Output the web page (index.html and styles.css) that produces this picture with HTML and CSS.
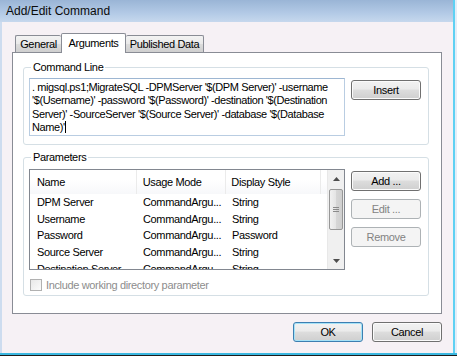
FILE: index.html
```html
<!DOCTYPE html>
<html>
<head>
<meta charset="utf-8">
<title>Add/Edit Command</title>
<link rel="stylesheet" href="styles.css">
</head>
<body>
<div class="frame">
  <div class="window">
    <div class="titlebar">Add/Edit Command</div>
    <div class="client">
      <div class="tabs">
        <div class="tab tab-general">General</div>
        <div class="tab tab-selected">Arguments</div>
        <div class="tab tab-published">Published Data</div>
      </div>
      <div class="pane">
        <div class="group group-cmd">
          <div class="legend">Command Line</div>
          <div class="group-body">
            <div class="textbox">. migsql.ps1;MigrateSQL -DPMServer '$(DPM Server)' -username<br>'$(Username)' -password '$(Password)' -destination '$(Destination<br>Server)' -SourceServer '$(Source Server)' -database '$(Database<br>Name)'<span class="caret"></span></div>
            <div class="btn btn-insert">Insert</div>
          </div>
        </div>
        <div class="group group-params">
          <div class="legend">Parameters</div>
          <div class="group-body">
            <div class="listview">
              <div class="lv-main">
                <div class="lv-header">
                  <div class="col col1">Name</div>
                  <div class="col col2">Usage Mode</div>
                  <div class="col col3">Display Style</div>
                  <div class="col col-rest"></div>
                </div>
                <div class="lv-row"><div class="col col1">DPM Server</div><div class="col col2">CommandArgu...</div><div class="col col3">String</div></div>
                <div class="lv-row"><div class="col col1">Username</div><div class="col col2">CommandArgu...</div><div class="col col3">String</div></div>
                <div class="lv-row"><div class="col col1">Password</div><div class="col col2">CommandArgu...</div><div class="col col3">Password</div></div>
                <div class="lv-row"><div class="col col1">Source Server</div><div class="col col2">CommandArgu...</div><div class="col col3">String</div></div>
                <div class="lv-row"><div class="col col1">Destination Server</div><div class="col col2">CommandArgu...</div><div class="col col3">String</div></div>
              </div>
              <div class="scrollbar">
                <div class="sb-btn">
                  <svg width="7" height="4" viewBox="0 0 7 4"><path d="M0 4 L3.5 0 L7 4 Z" fill="#4d4d4d"/></svg>
                </div>
                <div class="sb-track">
                  <div class="sb-thumb">
                    <svg width="6" height="6" viewBox="0 0 6 6"><path d="M0 0.5 H6 M0 2.5 H6 M0 4.5 H6" stroke="#8a8a8a" stroke-width="1"/></svg>
                  </div>
                </div>
                <div class="sb-btn">
                  <svg width="7" height="4" viewBox="0 0 7 4"><path d="M0 0 L3.5 4 L7 0 Z" fill="#4d4d4d"/></svg>
                </div>
              </div>
            </div>
            <div class="btn-col">
              <div class="btn">Add ...</div>
              <div class="btn btn-disabled">Edit ...</div>
              <div class="btn btn-disabled">Remove</div>
            </div>
          </div>
          <div class="check-row">
            <div class="checkbox"></div>
            <span class="check-label">Include working directory parameter</span>
          </div>
        </div>
      </div>
      <div class="footer">
        <div class="btn btn-default">OK</div>
        <div class="btn">Cancel</div>
      </div>
    </div>
  </div>
</div>
</body>
</html>
```
FILE: styles.css
```css
html, body {
  margin: 0;
  padding: 0;
}
body {
  width: 457px;
  height: 356px;
  overflow: hidden;
  background: #1c1c1c;
  font-family: "Liberation Sans", Arial, sans-serif;
  font-size: 11px;
  letter-spacing: -0.35px;
  color: #000;
}
.frame {
  width: 457px;
  height: 355px;
  box-sizing: border-box;
  padding-right: 2px;
  background: #e3eef8;
  border-bottom: 2px solid #3ab7e0;
}
.window {
  height: 100%;
  display: flex;
  flex-direction: column;
  border-right: 2px solid #5fd1f3;
  box-sizing: border-box;
}
.titlebar {
  height: 22px;
  flex: none;
  display: flex;
  align-items: center;
  padding-left: 6px;
  font-size: 12px;
  letter-spacing: 0;
  color: #0b0b0b;
  background: linear-gradient(#9ab5d6, #b3cae6 60%, #c6d8ed);
}
.client {
  flex: 1;
  display: flex;
  flex-direction: column;
  background: #f6f1f5;
  border-left: 2px solid #cddcef;
  padding-top: 11px;
}
.tabs {
  display: flex;
  align-items: flex-end;
  height: 19px;
  padding-left: 3px;
  margin-left: 10px;
  position: relative;
  z-index: 1;
}
.tab {
  box-sizing: border-box;
  height: 17px;
  border: 1px solid #898c95;
  border-bottom: none;
  border-radius: 2px 2px 0 0;
  background: linear-gradient(#f3f3f3, #e9e9e9 50%, #dcdcdc 51%, #cfcfcf);
  display: flex;
  align-items: center;
  justify-content: center;
  color: #000;
}
.tab-general {
  width: 46px;
  border-right: none;
}
.tab-selected {
  width: 65px;
  height: 20px;
  background: #fff;
  margin-bottom: -1px;
  padding-bottom: 2px;
}
.tab-published {
  width: 78px;
  border-left: none;
}
.pane {
  margin-left: 10px;
  width: 430px;
  height: 262px;
  box-sizing: border-box;
  border: 1px solid #898c95;
  background: #fff;
  padding: 14px 12px 0 10px;
  display: flex;
  flex-direction: column;
}
.group {
  border: 1px solid #d5dfe5;
  border-radius: 3px;
  display: flex;
  flex-direction: column;
}
.legend {
  align-self: flex-start;
  margin: -7px 0 0 7px;
  padding: 0 2px;
  line-height: 13px;
  background: #fff;
  color: #000;
}
.group-body {
  display: flex;
  align-items: flex-start;
  padding-left: 5px;
  gap: 6px;
}
.group-cmd .group-body {
  margin-top: 4px;
  padding-bottom: 8px;
}
.textbox {
  width: 316px;
  height: 58px;
  box-sizing: border-box;
  border: 1px solid #b9cde2;
  border-top-color: #9db6d2;
  padding: 2px 0 0 2px;
  line-height: 13.4px;
  letter-spacing: -0.4px;
  white-space: nowrap;
  overflow: hidden;
}
.caret {
  display: inline-block;
  width: 1px;
  height: 12px;
  background: #000;
  vertical-align: -2px;
}
.btn {
  width: 70px;
  height: 20px;
  box-sizing: border-box;
  border: 1px solid #707070;
  border-radius: 3px;
  background: linear-gradient(#f2f2f2, #ebebeb 45%, #dddddd 50%, #cfcfcf);
  box-shadow: inset 0 0 0 1px #fbfbfb;
  display: flex;
  align-items: center;
  justify-content: center;
  color: #000;
}
.btn-insert {
  margin-top: 2px;
}
.btn-disabled {
  border-color: #adb2b5;
  background: #f4f4f4;
  box-shadow: none;
  color: #838383;
}
.btn-default {
  border-color: #3c7fb1;
  box-shadow: inset 0 0 0 1px #a5e2f7;
}
.group-params {
  margin-top: 12px;
  padding-bottom: 4px;
}
.group-params .group-body {
  margin-top: 5px;
}
.listview {
  width: 316px;
  height: 101px;
  box-sizing: border-box;
  border: 1px solid #828790;
  display: flex;
  overflow: hidden;
}
.lv-main {
  flex: 1;
  overflow: hidden;
}
.lv-header {
  height: 24px;
  display: flex;
  align-items: stretch;
  background: linear-gradient(#ffffff, #ffffff 40%, #f7f8fa);
}
.lv-header .col {
  border-right: 1px solid #ebebeb;
  display: flex;
  align-items: center;
}
.lv-header .col-rest {
  flex: 1;
  border-right: none;
}
.col {
  box-sizing: border-box;
  padding-left: 6px;
  white-space: nowrap;
  overflow: hidden;
}
.col1 { width: 107px; padding-left: 7px; }
.col2 { width: 90px; }
.col3 { width: 95px; padding-left: 5px; }
.lv-row {
  height: 16.6px;
  display: flex;
  align-items: center;
}
.scrollbar {
  width: 17px;
  flex: none;
  display: flex;
  flex-direction: column;
  background: #f0f0f0;
  border-left: 1px solid #e8e8e8;
  box-sizing: border-box;
}
.sb-btn {
  height: 17px;
  display: flex;
  align-items: center;
  justify-content: center;
}
.sb-track {
  flex: 1;
  padding-top: 2px;
}
.sb-thumb {
  margin: 0 1px;
  height: 41px;
  box-sizing: border-box;
  border: 1px solid #979797;
  border-radius: 2px;
  background: linear-gradient(90deg, #f1f1f1, #e4e4e4 50%, #d6d6d6 51%, #cfcfcf);
  display: flex;
  align-items: center;
  justify-content: center;
}
.btn-col {
  display: flex;
  flex-direction: column;
  gap: 8px;
  margin-top: 2px;
}
.check-row {
  display: flex;
  align-items: center;
  height: 13px;
  margin-top: 8px;
  padding-left: 6px;
}
.checkbox {
  width: 12px;
  height: 12px;
  box-sizing: border-box;
  border: 1px solid #b1b1b1;
  background: linear-gradient(135deg, #e8e8e8, #fbfbfb);
  margin-right: 4px;
}
.check-label {
  color: #8d8d8d;
}
.footer {
  display: flex;
  gap: 9px;
  margin-top: 8px;
  margin-left: 291px;
}
```
